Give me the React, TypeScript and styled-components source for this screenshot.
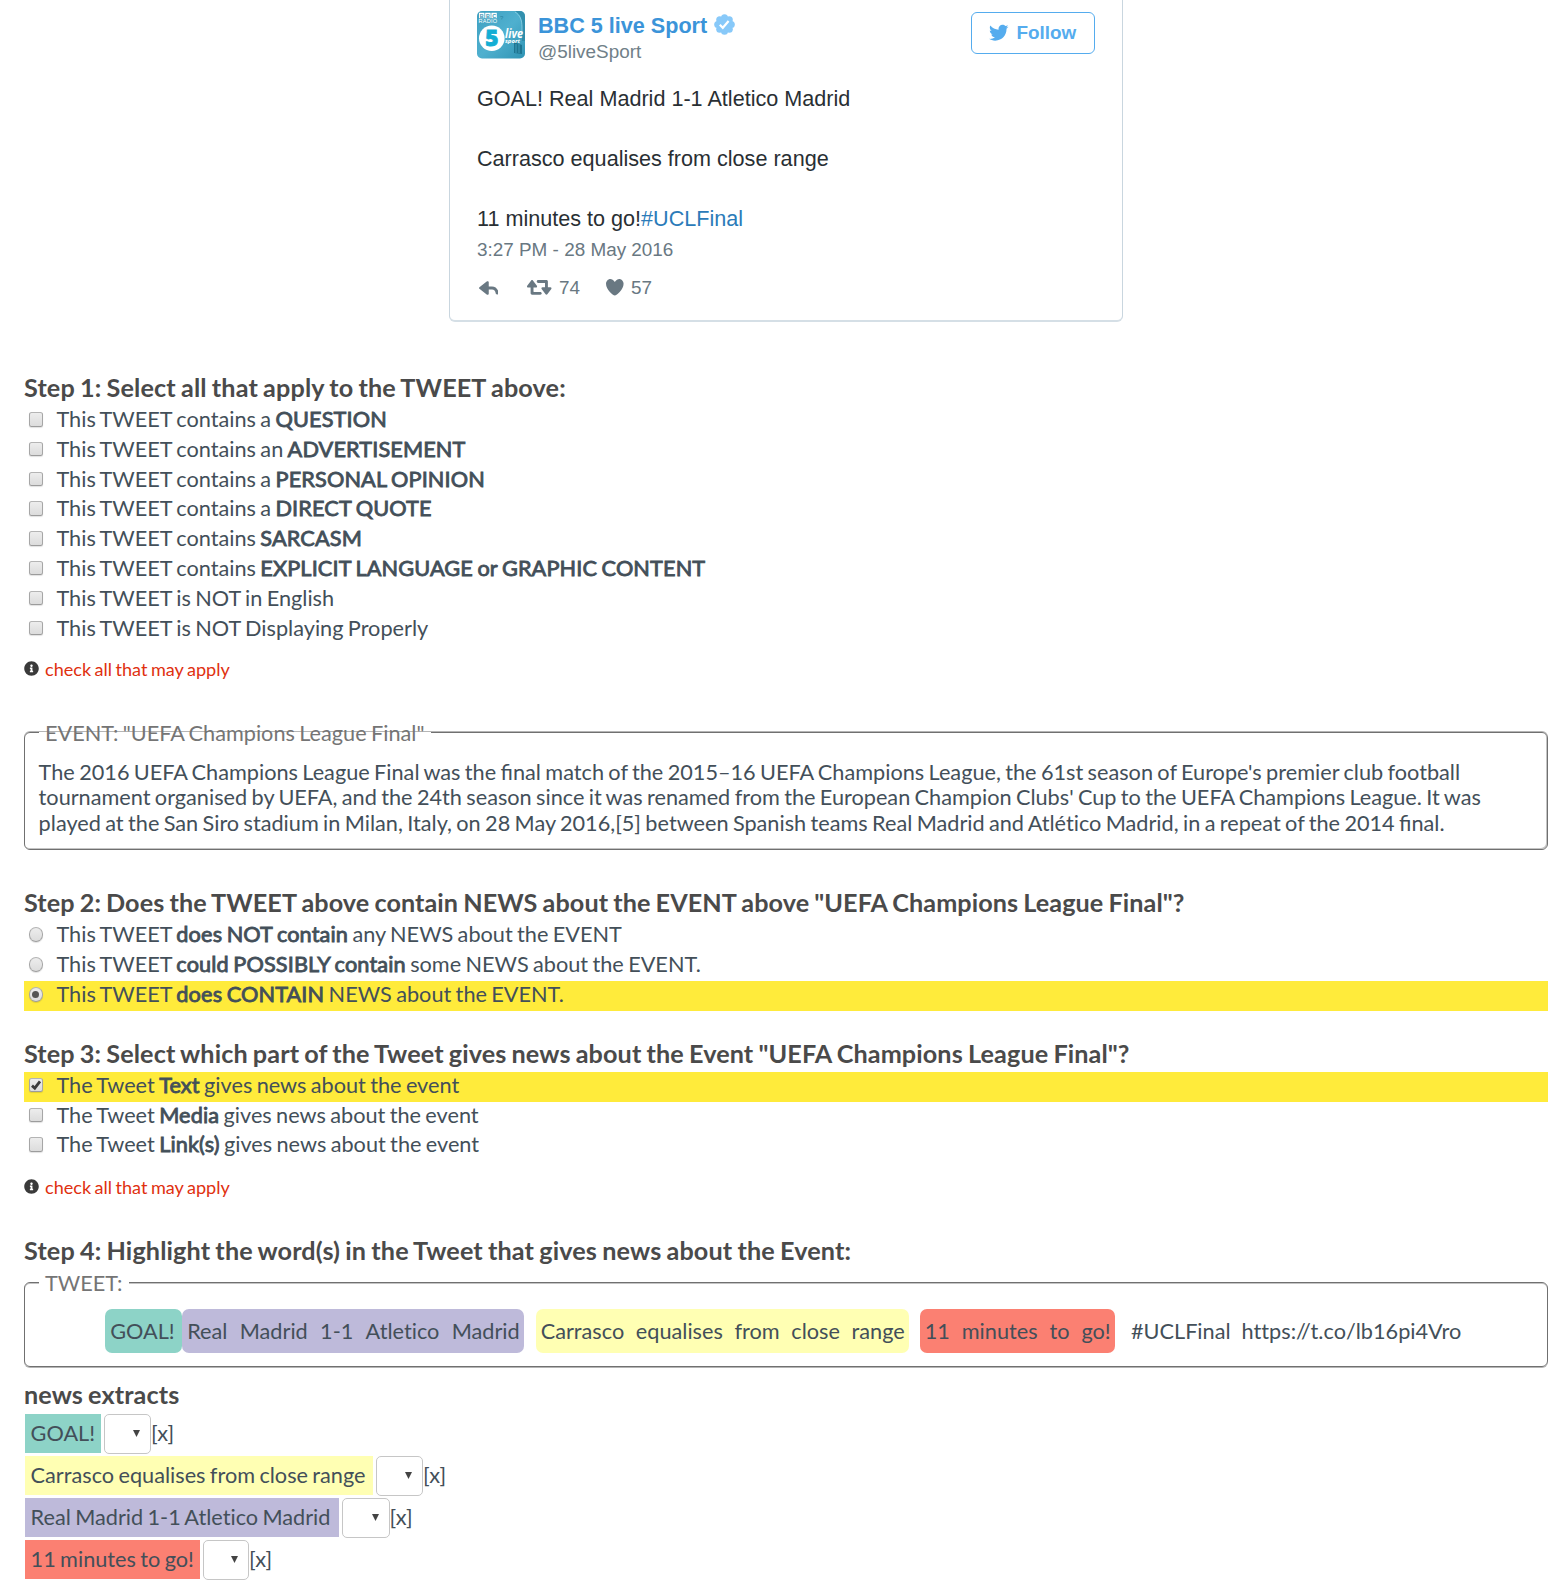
import React from "react";
import styled, { createGlobalStyle } from "styled-components";
import { FaInfoCircle, FaTwitter } from "react-icons/fa";

const GlobalStyle = createGlobalStyle`
  * { box-sizing: border-box; }
  body {
    margin: 0;
    background: #fff;
    color: #434f59;
    font-family: Lato, "Open Sans", sans-serif;
    font-size: 21.7px;
    font-variant-ligatures: none;
    word-spacing: -0.055em;
  }
`;

const Page = styled.main`
  display: flex;
  flex-direction: column;
  width: 1566px;
  height: 1588px;
  padding: 0 18px 0 24px;
  overflow: hidden;
`;

/* ---------- embedded tweet ---------- */

const TweetCard = styled.article`
  flex: none;
  align-self: flex-start;
  display: flex;
  flex-direction: column;
  width: 674px;
  height: 322px;
  margin-left: 425px;
  padding: 11px 27px 0;
  border: 1px solid #c9d6df;
  border-top: 0;
  border-bottom-width: 2px;
  border-bottom-color: #d5dfe6;
  border-radius: 0 0 6px 6px;
  font-family: "Liberation Sans", Arial, sans-serif;
  font-size: 21.6px;
  word-spacing: normal;
  color: #292f33;
`;

const TweetHeader = styled.header`
  display: flex;
  align-items: flex-start;
  height: 73px;
`;

const Avatar = styled.svg`
  flex: none;
  width: 48px;
  height: 48px;
  margin: 0 13.5px 0 -0.5px;
`;

const Author = styled.div`
  flex: 1;
  display: flex;
  flex-direction: column;
  padding-top: 1px;
`;

const AuthorName = styled.div`
  display: flex;
  align-items: center;
  gap: 6.5px;
  height: 28px;
  line-height: 28px;
  font-weight: 700;
  color: #3b94d9;
  svg {
    margin-bottom: 3px;
  }
`;

const Handle = styled.div`
  line-height: 24px;
  font-size: 18.9px;
  color: #707f88;
`;

const FollowButton = styled.button`
  display: flex;
  align-items: center;
  gap: 8px;
  width: 124px;
  height: 42px;
  margin-top: 0.5px;
  padding: 0 0 0 17px;
  border: 1.5px solid #55acee;
  border-radius: 6px;
  background: #fff;
  font: 700 18.9px "Liberation Sans", Arial, sans-serif;
  color: #55acee;
`;

const TweetBody = styled.p`
  margin: 0;
  line-height: 30px;
  white-space: pre-line;
`;

const Hashtag = styled.span`
  color: #2b7bb9;
`;

const TweetDate = styled.time`
  margin-top: 4px;
  line-height: 24px;
  font-size: 18.9px;
  color: #697882;
`;

const Actions = styled.div`
  display: flex;
  align-items: center;
  height: 22px;
  margin-top: 14.5px;
  padding-left: 1.5px;
  font-size: 18.9px;
  color: #697882;
`;

const Action = styled.span<{ $after?: number }>`
  display: flex;
  align-items: center;
  gap: 7.5px;
  margin-right: ${(p) => p.$after ?? 0}px;
  svg {
    fill: currentColor;
  }
`;

/* ---------- questionnaire ---------- */

const StepTitle = styled.h2<{ $top: number; $track?: number }>`
  flex: none;
  margin: ${(p) => p.$top}px 0 0;
  line-height: 30px;
  font-size: 25.2px;
  font-weight: 700;
  letter-spacing: ${(p) => p.$track ?? 0.1}px;
  word-spacing: -0.044em;
  color: #4a4a4a;
`;

const OptionList = styled.div<{ $top: number }>`
  flex: none;
  display: flex;
  flex-direction: column;
  margin-top: ${(p) => p.$top}px;
`;

const Option = styled.label<{ $on?: boolean }>`
  display: flex;
  align-items: flex-start;
  height: 29.8px;
  padding-left: 4.6px;
  line-height: 26.5px;
  background: ${(p) => (p.$on ? "#ffeb3b" : "transparent")};
`;

const Control = styled.span<{ $round?: boolean }>`
  flex: none;
  display: flex;
  align-items: center;
  justify-content: center;
  width: 14.5px;
  height: 14.5px;
  margin: 6px 13.4px 0 0;
  border: 1px solid #a9a9a9;
  border-color: #b4b4b4 #a6a6a6 #9c9c9c;
  border-radius: ${(p) => (p.$round ? "50%" : "2.5px")};
  background: linear-gradient(#ededed, #dcdcdc);
  box-shadow: 0 1px 1px rgba(0, 0, 0, 0.12);
`;

const Dot = styled.span`
  width: 7px;
  height: 7px;
  border-radius: 50%;
  background: #555;
`;

const Strong = styled.b`
  font-weight: 400;
  letter-spacing: 0.006em;
  -webkit-text-stroke: 0.85px currentColor;
`;

const Ligated = styled.span`
  font-variant-ligatures: common-ligatures;
`;

const Hint = styled.div<{ $top: number }>`
  flex: none;
  display: flex;
  align-items: center;
  gap: 6px;
  margin-top: ${(p) => p.$top}px;
  line-height: 22px;
  font-size: 18.1px;
  color: #e0300f;
  svg {
    flex: none;
    color: #3a3a3a;
  }
`;

const Fieldset = styled.fieldset<{ $top: number; $height: number; $edge: string }>`
  flex: none;
  min-width: 0;
  height: ${(p) => p.$height}px;
  margin: ${(p) => p.$top}px 0 0;
  padding: 0 14px;
  border: 1px solid #707070;
  border-radius: 6px;
  box-shadow: ${(p) => p.$edge};
`;

const Legend = styled.legend<{ $solid?: boolean }>`
  padding: 1px 7px 0 6px;
  line-height: 26px;
  color: #757575;
  background: ${(p) => (p.$solid ? "#fff" : "none")};
`;

const EventText = styled.p`
  margin: 13.6px -10px 0 -0.4px;
  line-height: 25.6px;
`;

const TokenLine = styled.div`
  display: flex;
  align-items: center;
  height: 44px;
  margin: 13px 0 0 66px;
`;

const Chip = styled.span<{ $bg: string; $w: number; $after: number }>`
  display: flex;
  align-items: center;
  justify-content: space-between;
  width: ${(p) => p.$w}px;
  height: 44px;
  margin-right: ${(p) => p.$after}px;
  padding: 0 3.8px 0 5.2px;
  border-radius: 7px;
  background: ${(p) => p.$bg};
`;

const Word = styled.span<{ $after?: number }>`
  padding-bottom: 1px;
  margin-right: ${(p) => p.$after ?? 0}px;
`;

const ExtractList = styled.div`
  flex: none;
  display: flex;
  flex-direction: column;
  gap: 3px;
  margin-top: 5px;
`;

const Extract = styled.div`
  display: flex;
  align-items: flex-start;
  height: 39px;
  padding-left: 1px;
  line-height: 38px;
`;

const ExtractText = styled.span<{ $bg: string; $w: number }>`
  width: ${(p) => p.$w}px;
  height: 39px;
  padding-left: 5.6px;
  white-space: nowrap;
  background: ${(p) => p.$bg};
`;

const Select = styled.span<{ $w: number }>`
  display: flex;
  align-items: center;
  justify-content: flex-end;
  width: ${(p) => p.$w}px;
  height: 40px;
  margin-left: 3px;
  padding: 0 10px 1px 0;
  border: 1.5px solid #c6c6c6;
  border-radius: 5px;
  background: #fff;
`;

const TEAL = "#8dd3c7";
const YELLOW = "#ffffb3";
const LILAC = "#bebada";
const CORAL = "#fb8072";

const chips = [
  { text: "GOAL!", bg: TEAL, w: 76.5, after: 0.5 },
  { text: "Real Madrid 1-1 Atletico Madrid", bg: LILAC, w: 341.5, after: 12 },
  { text: "Carrasco equalises from close range", bg: YELLOW, w: 373, after: 11 },
  { text: "11 minutes to go!", bg: CORAL, w: 195, after: 16.5 },
];

const extracts = [
  { text: "GOAL!", bg: TEAL, w: 75.5, select: 47.5 },
  { text: "Carrasco equalises from close range", bg: YELLOW, w: 347.5, select: 47.5 },
  { text: "Real Madrid 1-1 Atletico Madrid", bg: LILAC, w: 314, select: 47.5 },
  { text: "11 minutes to go!", bg: CORAL, w: 175, select: 46 },
];

const tweetFlags: [string, string][] = [
  ["This TWEET contains a ", "QUESTION"],
  ["This TWEET contains an ", "ADVERTISEMENT"],
  ["This TWEET contains a ", "PERSONAL OPINION"],
  ["This TWEET contains a ", "DIRECT QUOTE"],
  ["This TWEET contains ", "SARCASM"],
  ["This TWEET contains ", "EXPLICIT LANGUAGE or GRAPHIC CONTENT"],
  ["This TWEET is NOT in English", ""],
  ["This TWEET is NOT Displaying Properly", ""],
];

const newsLevels: [string, string][] = [
  ["does NOT contain", " any NEWS about the EVENT"],
  ["could POSSIBLY contain", " some NEWS about the EVENT."],
  ["does CONTAIN", " NEWS about the EVENT."],
];

const tweetParts = ["Text", "Media", "Link(s)"];

function AvatarImage() {
  return (
    <Avatar viewBox="0 0 48 48">
      <defs>
        <clipPath id="avatarClip">
          <rect width="48" height="47.5" rx="5" />
        </clipPath>
        <linearGradient id="avatarFill" x1="0" y1="0" x2="1" y2="1">
          <stop offset="0" stopColor="#3f9fc0" />
          <stop offset="0.5" stopColor="#4fb0cf" />
          <stop offset="1" stopColor="#2f93b3" />
        </linearGradient>
      </defs>
      <g clipPath="url(#avatarClip)">
        <rect width="48" height="48" fill="url(#avatarFill)" />
        <path d="M38 0h10v30h-3V14c0-7-2-11-7-14z" fill="#2a86a3" opacity="0.75" />
        <path d="M38 1c5 3 7 8 7 15v8" fill="none" stroke="#8fd3e6" strokeWidth="0.8" />
        <path d="M37 31v11l8 1v-9z" fill="#176a86" opacity="0.8" />
        <path d="M39 33v9M42 33v9" stroke="#3e9dbb" strokeWidth="1" />
        {["B", "B", "C"].map((c, i) => (
          <g key={i}>
            <rect x={2 + i * 6.2} y="1.8" width="5.4" height="5.4" fill="#fff" />
            <text x={4.7 + i * 6.2} y="6.5" fontSize="5.4" fontWeight="700" textAnchor="middle" fill="#3594b4" fontFamily="Liberation Sans">
              {c}
            </text>
          </g>
        ))}
        <text x="1.6" y="12.4" fontSize="5.6" textLength="18.6" fill="#fff" fontFamily="Liberation Sans">RADIO</text>
        <text x="23" y="8.5" fontSize="6" fill="#2c83a0" fontFamily="Liberation Sans">?</text>
        <circle cx="14.8" cy="27.3" r="12.8" fill="#fff" />
        <text x="14.8" y="35.2" fontSize="22.5" fontWeight="900" textAnchor="middle" fill="#13aed4" stroke="#13aed4" strokeWidth="0.8" fontFamily="Open Sans">5</text>
        <text x="28" y="26.6" fontSize="11.5" fontWeight="700" fontStyle="italic" textLength="18" lengthAdjust="spacingAndGlyphs" fill="#fff" fontFamily="Open Sans">live</text>
        <text x="28" y="31.6" fontSize="6" fontWeight="700" fontStyle="italic" textLength="15" lengthAdjust="spacingAndGlyphs" fill="#fff" fontFamily="Open Sans">sport</text>
      </g>
    </Avatar>
  );
}

function VerifiedBadge() {
  const lobes = Array.from({ length: 8 }, (_, i) => (i * Math.PI) / 4);
  return (
    <svg width="21" height="21" viewBox="0 0 21 21">
      <g fill="#88c9f9">
        <circle cx="10.5" cy="10.5" r="8" />
        {lobes.map((a) => (
          <circle key={a} cx={10.5 + 6.8 * Math.cos(a)} cy={10.5 + 6.8 * Math.sin(a)} r="3.5" />
        ))}
      </g>
      <path d="M5.8 10.8l3 3 5.8-6.8" fill="none" stroke="#fff" strokeWidth="2.2" />
    </svg>
  );
}

function CheckMark() {
  return (
    <svg width="12" height="12" viewBox="0 0 12 12">
      <path d="M2 6.6l2.8 2.6L10 2.4" fill="none" stroke="#3c3c3c" strokeWidth="2.8" />
    </svg>
  );
}

export default function App() {
  return (
    <>
      <GlobalStyle />
      <Page>
        <TweetCard>
          <TweetHeader>
            <AvatarImage />
            <Author>
              <AuthorName>
                BBC 5 live Sport
                <VerifiedBadge />
              </AuthorName>
              <Handle>@5liveSport</Handle>
            </Author>
            <FollowButton>
              <FaTwitter size={19.5} />
              Follow
            </FollowButton>
          </TweetHeader>
          <TweetBody>
            {"GOAL! Real Madrid 1-1 Atletico Madrid\n\nCarrasco equalises from close range\n\n11 minutes to go!"}
            <Hashtag>#UCLFinal</Hashtag>
          </TweetBody>
          <TweetDate>3:27 PM - 28 May 2016</TweetDate>
          <Actions>
            <Action $after={29}>
              <svg width="19.5" height="14" viewBox="5 16 54 38">
                <path d="M41 31h-9V19c0-1.14-.647-2.183-1.668-2.688-1.022-.507-2.243-.39-3.15.302l-21 16C5.438 33.18 5 34.064 5 35s.437 1.82 1.182 2.387l21 16c.533.405 1.174.613 1.82.613.453 0 .908-.103 1.33-.312C31.354 53.183 32 52.14 32 51V39h9c5.514 0 10 4.486 10 10 0 2.21 1.79 4 4 4s4-1.79 4-4c0-9.925-8.075-18-18-18z" />
              </svg>
            </Action>
            <Action $after={26}>
              <svg width="24.5" height="14.8" viewBox="3 15 68 41">
                <path d="M70.676 36.644C70.166 35.636 69.13 35 68 35h-7V19c0-2.21-1.79-4-4-4H34c-2.21 0-4 1.79-4 4s1.79 4 4 4h18c.552 0 .998.446 1 .998V35h-7c-1.13 0-2.165.636-2.676 1.644-.51 1.01-.412 2.22.257 3.13l11 15c.565.77 1.463 1.226 2.42 1.226s1.855-.455 2.42-1.226l11-15c.668-.912.767-2.122.255-3.13zM40 48H22c-.54 0-.97-.427-.992-.96L21 36h7c1.13 0 2.166-.636 2.677-1.644.51-1.01.412-2.22-.257-3.13l-11-15C18.854 15.456 17.956 15 17 15s-1.854.455-2.42 1.226l-11 15c-.668.912-.767 2.122-.255 3.13C3.834 35.365 4.87 36 6 36h7l.012 16.003c.002 2.208 1.792 3.997 4 3.997h22.99c2.208 0 4-1.79 4-4s-1.792-4-4-4z" />
              </svg>
              74
            </Action>
            <Action>
              <svg width="17.6" height="16.5" viewBox="3.5 12 47 44">
                <path d="M38.723 12c-7.187 0-11.16 7.306-11.723 8.131C26.437 19.306 22.504 12 15.277 12 8.791 12 3.533 18.163 3.533 24.647 3.533 39.964 21.891 55.907 27 56c5.109-.093 23.467-16.036 23.467-31.353C50.467 18.163 45.209 12 38.723 12z" />
              </svg>
              57
            </Action>
          </Actions>
        </TweetCard>

        <StepTitle $top={50} $track={0.14}>
          Step 1: Select all that apply to the TWEET above:
        </StepTitle>
        <OptionList $top={4}>
          {tweetFlags.map(([text, strong]) => (
            <Option key={text + strong}>
              <Control />
              <span>
                {text}
                {strong && <Strong>{strong}</Strong>}
              </span>
            </Option>
          ))}
        </OptionList>
        <Hint $top={13.6}>
          <FaInfoCircle size={15} />
          check all that may apply
        </Hint>

        <Fieldset
          $top={39}
          $height={131.3}
          $edge="0 -1px 0 #b5b5b5, inset -1px -1px 0 #c4c4c4"
        >
          <Legend>EVENT: "UEFA Champions League Final"</Legend>
          <EventText>
            The 2016 UEFA Champions League Final was the <Ligated>final</Ligated> match of the
            2015–16 UEFA Champions League, the 61st season of Europe's premier club football
            tournament organised by UEFA, and the 24th season since it was renamed from the European
            Champion Clubs' Cup to the UEFA Champions League. It was played at the San Siro stadium
            in Milan, Italy, on 28 May 2016,[5] between Spanish teams Real Madrid and Atlético
            Madrid, in a repeat of the 2014 <Ligated>final</Ligated>.
          </EventText>
        </Fieldset>

        <StepTitle $top={37} $track={0.08}>
          Step 2: Does the TWEET above contain NEWS about the EVENT above "UEFA Champions League
          Final"?
        </StepTitle>
        <OptionList $top={4.2}>
          {newsLevels.map(([strong, rest], i) => (
            <Option key={strong} $on={i === 2}>
              <Control $round>{i === 2 && <Dot />}</Control>
              <span>
                This TWEET <Strong>{strong}</Strong>
                {rest}
              </span>
            </Option>
          ))}
        </OptionList>

        <StepTitle $top={27} $track={0.11}>
          Step 3: Select which part of the Tweet gives news about the Event "UEFA Champions League
          Final"?
        </StepTitle>
        <OptionList $top={4}>
          {tweetParts.map((part, i) => (
            <Option key={part} $on={i === 0}>
              <Control>{i === 0 && <CheckMark />}</Control>
              <span>
                The Tweet <Strong>{part}</Strong> gives news about the event
              </span>
            </Option>
          ))}
        </OptionList>
        <Hint $top={14.6}>
          <FaInfoCircle size={15} />
          check all that may apply
        </Hint>

        <StepTitle $top={37.3} $track={0.137}>
          Step 4: Highlight the word(s) in the Tweet that gives news about the Event:
        </StepTitle>
        <Fieldset
          $top={4}
          $height={98}
          $edge="0 1px 0 #b5b5b5, inset 0 1px 0 #c4c4c4"
        >
          <Legend $solid>TWEET:</Legend>
          <TokenLine>
            {chips.map((chip) => (
              <Chip key={chip.text} $bg={chip.bg} $w={chip.w} $after={chip.after}>
                {chip.text.split(" ").map((word, i) => (
                  <Word key={i}>{word}</Word>
                ))}
              </Chip>
            ))}
            <Word $after={11}>#UCLFinal</Word>
            <Word>https://t.co/lb16pi4Vro</Word>
          </TokenLine>
        </Fieldset>

        <StepTitle $top={11.7}>news extracts</StepTitle>
        <ExtractList>
          {extracts.map((item) => (
            <Extract key={item.text}>
              <ExtractText $bg={item.bg} $w={item.w}>
                {item.text}
              </ExtractText>
              <Select $w={item.select}>
                <svg width="7" height="7" viewBox="0 0 7 7">
                  <path d="M0 0h7L3.5 7z" fill="#444" />
                </svg>
              </Select>
              <span>[x]</span>
            </Extract>
          ))}
        </ExtractList>
      </Page>
    </>
  );
}
